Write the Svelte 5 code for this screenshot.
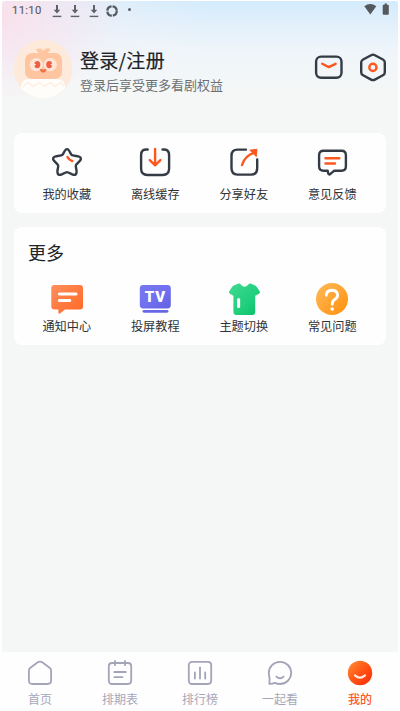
<script>
  const tools = [
    { id: 'star', label: '我的收藏' },
    { id: 'download', label: '离线缓存' },
    { id: 'share', label: '分享好友' },
    { id: 'feedback', label: '意见反馈' }
  ];
  const more = [
    { id: 'notice', label: '通知中心' },
    { id: 'tv', label: '投屏教程' },
    { id: 'theme', label: '主题切换' },
    { id: 'faq', label: '常见问题' }
  ];
  const tabs = [
    { id: 'home', label: '首页' },
    { id: 'schedule', label: '排期表' },
    { id: 'rank', label: '排行榜' },
    { id: 'together', label: '一起看' },
    { id: 'mine', label: '我的', active: true }
  ];
</script>

{#snippet icon(id)}
  <svg class="icon" width="32" height="32" viewBox="0 0 32 32">
    {#if id === 'star'}
      <path class="dark" d="M13.7 4Q16 .2 18.3 4L20 7.1Q20.6 8.2 21.8 8.4L26.5 9.2Q32 10.4 28.6 14.2L25.5 17.3Q24.6 18.2 24.8 19.4L25.6 24Q25.8 29.2 21.3 27.4L17.3 25.5Q16 24.9 14.7 25.5L10.7 27.4Q6.2 29.2 6.4 24L7.2 19.4Q7.4 18.2 6.5 17.3L3.4 14.2Q0 10.4 5.5 9.2L10.2 8.4Q11.4 8.2 12 7.1Z" />
      <path class="hot" d="M16.4 10Q17.8 13 21.3 14" />
    {:else if id === 'download'}
      <path class="dark" d="M8.7 2.5Q2.1 1.8 2.1 8V21.6Q2.1 28 8.5 28H23.7Q30.1 28 30.1 21.6V8Q30.1 1.8 23.5 2.5" />
      <path class="hot" d="M16.1 2V18M10.8 13.1L16.1 18.3L21.4 13.1" />
    {:else if id === 'share'}
      <path class="dark" d="M18 2.6H9.5Q3.5 2.6 3.5 8.7V21Q3.5 27.6 9.5 27.6H23.2Q29.2 27.6 29.2 21V12.5" />
      <path class="hot" d="M14 18Q17 8.5 26.5 5.7" />
      <path fill="#fc571f" stroke="#fc571f" stroke-width="1" stroke-linejoin="round" d="M21.8 3.2L29 2.3L28.2 9.6L25.6 6.6Z" />
    {:else if id === 'feedback'}
      <path class="dark" d="M7.5 3.8H25.5Q29.9 3.8 29.9 8.2V19.3Q29.9 23.7 25.5 23.7H18.3L14.7 26.7Q12.5 28.4 12.2 26.2L11.7 23.7H7.5Q3.1 23.7 3.1 19.3V8.2Q3.1 3.8 7.5 3.8Z" />
      <path class="hot" d="M9.5 11.3H23.3M9.5 16.5H19" />
    {:else if id === 'notice'}
      <defs>
        <linearGradient id="notice-fill" x1="0" y1="0" x2="1" y2="1">
          <stop offset="0" stop-color="#ff8f5c" /><stop offset="1" stop-color="#ff6725" />
        </linearGradient>
      </defs>
      <path fill="url(#notice-fill)" d="M3.5 2H29Q32 2 32 5V23.5Q32 26.5 29 26.5H14L9 30.4Q7.4 31.4 7.4 29.5V26.5H3.5Q.3 26.5 .3 23.5V5Q.3 2 3.5 2Z" />
      <path class="pale" d="M8.4 11H25M8.4 17.5H18.8" />
    {:else if id === 'tv'}
      <defs>
        <linearGradient id="tv-fill" x1="0" y1="0" x2="1" y2="1">
          <stop offset="0" stop-color="#7778ef" /><stop offset=".5" stop-color="#7171f0" /><stop offset="1" stop-color="#6261df" />
        </linearGradient>
      </defs>
      <rect x=".8" y="2" width="31" height="23.4" rx="3.4" fill="url(#tv-fill)" />
      <path d="M5 28.3H28" stroke="#6767e5" stroke-width="2.8" stroke-linecap="round" />
      <text class="tv" x="16.4" y="18.9" text-anchor="middle">TV</text>
    {:else if id === 'theme'}
      <defs>
        <linearGradient id="shirt-fill" x1="0" y1="0" x2="1" y2="1">
          <stop offset="0" stop-color="#40da91" /><stop offset=".6" stop-color="#20cf7c" /><stop offset="1" stop-color="#08bd66" />
        </linearGradient>
      </defs>
      <path fill="url(#shirt-fill)" d="M10.7 .5Q12 .2 12.8 1.5Q16.5 6 20.4 1.5Q21.3 .2 22.5 .5L27.2 2.5Q28.2 3 28.8 4L31.7 8.3Q32.5 9.8 31 10.7L27.2 12.7V29Q27.2 32 24.2 32H8.4Q5.4 32 5.4 29V12.7L1.9 10.7Q.4 9.8 1.3 8.3L4 4Q4.7 3 5.7 2.5Z" />
      <path class="pale" d="M10.6 16.5V23.5" />
    {:else}
      <defs>
        <linearGradient id="faq-fill" x1="0" y1="0" x2="1" y2="1">
          <stop offset="0" stop-color="#ffb95d" /><stop offset=".55" stop-color="#ffa32e" /><stop offset="1" stop-color="#ff8f0c" />
        </linearGradient>
      </defs>
      <circle cx="16" cy="16" r="16" fill="url(#faq-fill)" />
      <path class="query" d="M10.3 12.2Q10.6 7.2 16 7.2Q21.6 7.4 21.6 12.2Q21.6 14.6 19 16.2Q16.2 18 16.2 21.2" />
      <circle cx="16.2" cy="26" r="1.8" fill="#fff" />
    {/if}
  </svg>
{/snippet}

{#snippet tabIcon(id)}
  <svg class="tab-icon" width="26" height="26" viewBox="0 0 26 26">
    {#if id === 'home'}
      <path d="M1.9 10.7Q1.9 8.8 3.4 7.7L10.8 2.3Q13 .8 15.2 2.3L22.6 7.7Q24.1 8.8 24.1 10.7V20.6Q24.1 24 20.6 24H5.4Q1.9 24 1.9 20.6Z" />
    {:else if id === 'schedule'}
      <rect x="1.8" y="3" width="22.4" height="21" rx="3.2" />
      <path d="M8 .9V5.2M18 .9V5.2M7.3 12H18.8M7.3 17.1H15.5" />
    {:else if id === 'rank'}
      <rect x="1.8" y="1.9" width="22.4" height="22.1" rx="3.2" />
      <path d="M7.9 12.4V18.5M13 7.4V18.5M18.2 12.4V18.5" />
    {:else if id === 'together'}
      <path d="M2.4 23.9L2.6 18Q1.8 15.7 1.8 13A11.2 11.1 0 1 1 13 24Q10.2 24 7.8 22.9Q5.2 24 2.4 23.9Z" />
      <path d="M9.4 16.6Q13 20 16.6 16.6" />
    {:else}
      <defs>
        <linearGradient id="mine-fill" x1="0" y1="0" x2="1" y2="1">
          <stop offset="0" stop-color="#ff9137" /><stop offset=".5" stop-color="#ff5414" /><stop offset="1" stop-color="#f92808" />
        </linearGradient>
      </defs>
      <circle class="face" cx="13" cy="13" r="12.2" />
      <path class="smile" d="M8 15.4Q13 19.8 18 15.4" />
    {/if}
  </svg>
{/snippet}

<div class="screen">
  <div class="body">
    <div class="status">
      <span class="clock">11:10</span>
      <div class="notes">
        {#each [0, 1, 2] as n (n)}
          <svg width="10" height="14" viewBox="0 0 10 14">
            <path d="M5 1V8" stroke="#5d626a" stroke-width="2" />
            <path d="M1.7 5.8H8.3L5 9.5Z" fill="#5d626a" />
            <path d="M.7 12.4H9.3" stroke="#5d626a" stroke-width="1.4" />
          </svg>
        {/each}
        <svg class="sync" width="14" height="14" viewBox="0 0 14 14">
          <circle cx="7" cy="7" r="4.7" fill="none" stroke="#555a60" stroke-width="2.3" stroke-dasharray="6.4 .98" />
        </svg>
        <i class="dot"></i>
      </div>
      <svg width="26" height="13" viewBox="0 0 26 13">
        <path d="M.3 3.3Q6.3-1.1 12.3 3.3L6.3 11.4Z" fill="#53595d" />
        <path d="M19.7 1.7H20.6V.4H22.9V1.7H23.8Q24.8 1.7 24.8 2.7V10.7Q24.8 11.7 23.8 11.7H19.7Q18.7 11.7 18.7 10.7V2.7Q18.7 1.7 19.7 1.7Z" fill="#53595d" />
      </svg>
    </div>

    <header>
      <svg class="avatar" width="60" height="60" viewBox="0 0 60 60">
        <defs><clipPath id="avatar-clip"><circle cx="30" cy="30" r="29.3" /></clipPath></defs>
        <g clip-path="url(#avatar-clip)">
          <rect width="60" height="60" fill="#fdeadb" />
          <path d="M23 10.5Q28 8 30.2 12Q33 7.5 37.5 10.3Q36 13.5 33 15H27Q24.5 13.5 23 10.5Z" fill="#ffc5a0" />
          <rect x="12" y="14" width="37" height="26" rx="7" fill="#ffc5a0" />
          <circle cx="23.3" cy="25.6" r="6.6" fill="#ffe5d5" />
          <circle cx="37.3" cy="25.6" r="6.6" fill="#ffe5d5" />
          <ellipse cx="24.3" cy="25.6" rx="3" ry="3.6" fill="#ee6046" />
          <ellipse cx="36.2" cy="25.6" rx="3" ry="3.6" fill="#ee6046" />
          <path d="M20.6 24L23.2 25.6L20.6 27.2ZM39.9 24L37.3 25.6L39.9 27.2Z" fill="#ffe5d5" />
          <path d="M26.8 30.2Q28.5 29.4 30.2 30.8Q31.9 29.4 33.6 30.2Q32.8 33.6 30.2 33.6Q27.6 33.6 26.8 30.2Z" fill="#f0704c" />
          <path d="M8 47Q9 40 16 40H44Q51 40 52 47L56 60H4Z" fill="#fffdfa" />
          <path d="M10 48L15 43.5L20.5 47.5L26 43.5L31.5 47.5L37 43.5L42.5 47.5L47.5 43.5L51 47" fill="none" stroke="#fdecdf" stroke-width="1.3" />
        </g>
      </svg>
      <div class="login">
        <div class="title">登录/注册</div>
        <div class="sub">登录后享受更多看剧权益</div>
      </div>
      <svg width="30" height="30" viewBox="0 0 30 30">
        <rect class="dark" x="2.1" y="4.6" width="25.4" height="21.2" rx="5" />
        <path class="hot" d="M8.2 11.8L14.8 15.1L21.6 11.8" />
      </svg>
      <svg class="gear" width="30" height="30" viewBox="0 0 30 30">
        <path class="dark" d="M13.1 3.2Q15 2.1 16.9 3.2L24.9 7.5Q26.8 8.5 26.8 10.6V20.2Q26.8 22.3 24.9 23.3L16.9 27.6Q15 28.7 13.1 27.6L5.1 23.3Q3.2 22.3 3.2 20.2V10.6Q3.2 8.5 5.1 7.5Z" />
        <circle class="hot" cx="14.9" cy="15.4" r="3.6" />
      </svg>
    </header>

    <section class="card tools">
      {#each tools as item (item.id)}
        <div class="cell">{@render icon(item.id)}<span>{item.label}</span></div>
      {/each}
    </section>

    <section class="card more">
      <h2>更多</h2>
      <div class="grid">
        {#each more as item (item.id)}
          <div class="cell">{@render icon(item.id)}<span>{item.label}</span></div>
        {/each}
      </div>
    </section>
  </div>

  <nav>
    {#each tabs as tab (tab.id)}
      <div class="tab" class:active={tab.active}>{@render tabIcon(tab.id)}<span>{tab.label}</span></div>
    {/each}
  </nav>
</div>

<style>
  .screen {
    box-sizing: border-box;
    width: 400px;
    height: 711px;
    padding: 1px 2px 0;
    display: flex;
    flex-direction: column;
    overflow: hidden;
    background: #fefefe;
    font-family: "Noto Sans CJK SC", sans-serif;
  }
  .body {
    flex: 1;
    min-height: 0;
    border-radius: 3px 3px 0 0;
    background:
      radial-gradient(ellipse 120px 90px at 0 14px, rgba(250, 222, 233, .85), rgba(246, 232, 242, 0)),
      linear-gradient(90deg, rgba(243, 242, 248, .8) 0, rgba(243, 244, 249, 0) 210px) 0 0 / 100% 60px no-repeat,
      linear-gradient(180deg, #d3ebfc 0, #e2f0fb 24px, #eff5fa 50px, #f5f7f7 88px);
    background-color: #f5f7f7;
  }
  .status {
    display: flex;
    align-items: center;
    height: 19px;
    padding: 0 10px;
  }
  .clock {
    width: 40px;
    font: 400 11.3px/18px Roboto, sans-serif;
    letter-spacing: .3px;
    color: #5b5d63;
    -webkit-text-stroke: .15px #5b5d63;
  }
  .notes {
    flex: 1;
    display: flex;
    align-items: center;
    gap: 8.4px;
  }
  .sync {
    margin-left: -2px;
  }
  .dot {
    width: 3.4px;
    height: 3.4px;
    margin: -2px 0 0 0;
    border-radius: 50%;
    background: #5a6066;
  }
  .status > svg {
    margin: -2px -2px 0 0;
  }
  header {
    display: flex;
    align-items: center;
    height: 60px;
    margin-top: 19px;
    padding: 0 10px 0 11px;
  }
  .login {
    flex: 1;
    padding: 3px 0 0 7px;
  }
  .title {
    font-size: 19px;
    line-height: 26px;
    letter-spacing: .3px;
    color: #202326;
    -webkit-text-stroke: .2px #202326;
  }
  .sub {
    font-size: 13px;
    line-height: 18px;
    padding-top: 3px;
    color: #6b7074;
  }
  header > svg:not(.avatar) {
    margin-top: -4px;
  }
  .gear {
    margin-left: 14px;
  }
  .dark {
    fill: none;
    stroke: #343b44;
    stroke-width: 2.4;
    stroke-linecap: round;
    stroke-linejoin: round;
  }
  .hot {
    fill: none;
    stroke: #fc571f;
    stroke-width: 2.4;
    stroke-linecap: round;
    stroke-linejoin: round;
  }
  .pale {
    fill: none;
    stroke: #fff;
    stroke-width: 3.1;
    stroke-linecap: round;
  }
  .query {
    fill: none;
    stroke: #fff;
    stroke-width: 2.9;
    stroke-linecap: round;
  }
  .tv {
    font: 900 15px Roboto, sans-serif;
    letter-spacing: .8px;
    fill: #fff;
  }
  .card {
    box-sizing: border-box;
    margin: 0 12px;
    border-radius: 8px;
    background: #fefefe;
  }
  .tools {
    display: flex;
    height: 80px;
    margin-top: 34px;
    padding: 14px 9.5px 0 8.5px;
  }
  .more {
    height: 118px;
    margin-top: 14px;
    padding: 13px 9.5px 0 8.5px;
  }
  h2 {
    margin: 0 0 0 5.5px;
    font-size: 18px;
    line-height: 24px;
    font-weight: 400;
    color: #202326;
  }
  .grid {
    display: flex;
    margin-top: 19px;
  }
  .cell {
    flex: 1;
    display: flex;
    flex-direction: column;
    align-items: center;
    font-size: 12.2px;
    line-height: 18px;
    color: #303336;
  }
  .tools .cell span {
    margin-top: 6px;
  }
  .grid .cell span {
    margin-top: 2px;
  }
  nav {
    display: flex;
    height: 59px;
    margin: 0 -2px;
    background: #fefefe;
  }
  .tab {
    flex: 1;
    display: flex;
    flex-direction: column;
    align-items: center;
    padding-top: 8px;
    font-size: 12px;
    line-height: 18px;
    color: #a6a6ba;
  }
  .tab span {
    margin-top: 4px;
  }
  .tab-icon {
    fill: none;
    stroke: #a4a4b9;
    stroke-width: 1.8;
    stroke-linecap: round;
    stroke-linejoin: round;
  }
  .tab-icon .face {
    fill: url(#mine-fill);
    stroke: none;
  }
  .tab-icon .smile {
    stroke: #ffe9df;
    stroke-width: 2.2;
  }
  .active {
    color: #fc5a26;
    font-weight: 500;
  }
</style>
